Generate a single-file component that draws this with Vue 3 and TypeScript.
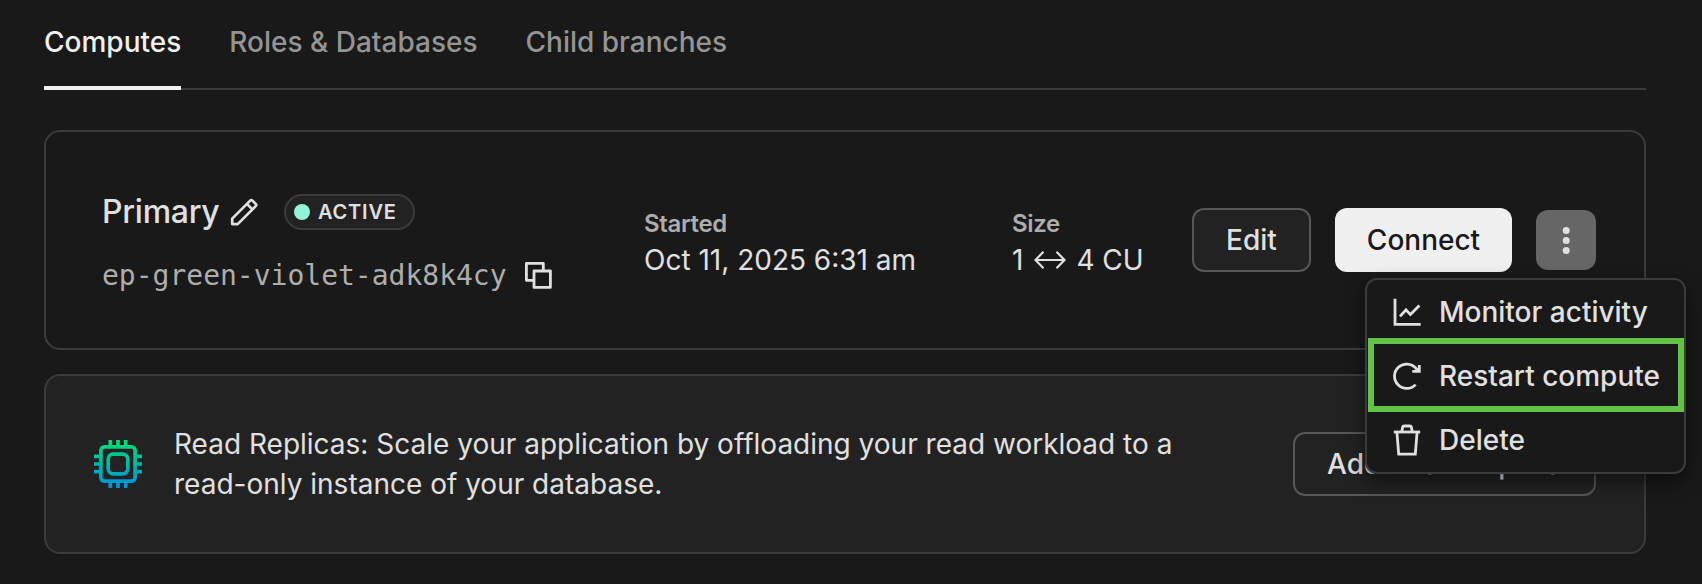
<script setup lang="ts">
import { ref } from 'vue'

type MenuIcon = 'chart' | 'restart' | 'trash'
interface MenuItem {
  label: string
  icon: MenuIcon
  highlighted?: boolean
}

const tabs: string[] = ['Computes', 'Roles & Databases', 'Child branches']
const activeTab = ref<string>('Computes')

const menuItems: MenuItem[] = [
  { label: 'Monitor activity', icon: 'chart' },
  { label: 'Restart compute', icon: 'restart', highlighted: true },
  { label: 'Delete', icon: 'trash' },
]
</script>

<template>
  <main class="page">
    <nav class="tabs">
      <button
        v-for="tab in tabs"
        :key="tab"
        class="tab"
        :class="{ active: tab === activeTab }"
        @click="activeTab = tab"
      >{{ tab }}</button>
    </nav>

    <section class="card compute">
      <div class="identity">
        <div class="title-row">
          <h2 class="name">Primary</h2>
          <svg class="pencil" width="28" height="28" viewBox="0 0 28 28" fill="none" stroke="currentColor" stroke-width="2.7" stroke-linejoin="round">
            <path d="M2.2 26.1V20.6L20.2 2.6Q21.3 1.5 22.4 2.6L25.7 5.9Q26.8 7 25.7 8.1L7.7 26.1Z" />
            <path d="M16.9 5.9L22.4 11.4" />
          </svg>
          <span class="badge"><i class="dot"></i>ACTIVE</span>
        </div>
        <div class="endpoint-row">
          <span class="endpoint">ep-green-violet-adk8k4cy</span>
          <svg class="copy" width="28" height="28" viewBox="0 0 28 28" fill="none" stroke="currentColor" stroke-width="2.8" stroke-linejoin="round">
            <path d="M9.2 19.3H2.4V2.4H19.3V9.2" />
            <rect x="10" y="10" width="16.4" height="16.4" />
          </svg>
        </div>
      </div>

      <dl class="fact started">
        <dt>Started</dt>
        <dd>Oct 11, 2025 6:31 am</dd>
      </dl>
      <dl class="fact size">
        <dt>Size</dt>
        <dd>
          <span>1</span>
          <svg class="range" width="32" height="20" viewBox="0 0 32 20" fill="none" stroke="currentColor" stroke-width="2.2">
            <path d="M1.5 10H30.5M9.5 1.7L1.5 10L9.5 18.3M22.5 1.7L30.5 10L22.5 18.3" />
          </svg>
          <span>4 CU</span>
        </dd>
      </dl>

      <div class="actions">
        <button class="btn outline edit">Edit</button>
        <button class="btn solid">Connect</button>
        <div class="more-wrap">
          <button class="more" aria-label="More">
            <svg width="8" height="28" viewBox="0 0 8 28" fill="currentColor">
              <circle cx="4.2" cy="4.6" r="3.5" />
              <circle cx="4.2" cy="14.6" r="3.5" />
              <circle cx="4.2" cy="24.5" r="3.5" />
            </svg>
          </button>
          <ul class="menu">
            <li v-for="item in menuItems" :key="item.label" class="menu-item" :class="{ highlighted: item.highlighted }">
              <svg v-if="item.icon === 'chart'" width="28" height="28" viewBox="0 0 28 28" fill="none" stroke="currentColor" stroke-width="2.8">
                <path d="M2 .7V26.4H27.7" />
                <path d="M7 18.4L13 11.8L17.4 16.6L26.4 7.6" />
              </svg>
              <svg v-else-if="item.icon === 'restart'" width="28" height="28" viewBox="0 0 28 28" fill="none" stroke="currentColor" stroke-width="2.8">
                <path d="M22.6 22.6A12.2 12.2 0 1 1 22.9 6.2L25.6 9" />
                <path d="M26.3 3V9.3H19.3" />
              </svg>
              <svg v-else width="28" height="32" viewBox="0 0 28 32" fill="none" stroke="currentColor" stroke-width="2.8">
                <path d="M.8 8H27.2" />
                <path d="M3.9 8L5.7 30.2H22.3L24.1 8" />
                <path d="M8.7 8L9.6 3.2Q9.9 2 11.1 2H16.9Q18.1 2 18.4 3.2L19.3 8" />
              </svg>
              <span>{{ item.label }}</span>
            </li>
          </ul>
        </div>
      </div>
    </section>

    <section class="card replicas">
      <svg class="chip" width="48" height="48" viewBox="0 0 48 48" fill="none" stroke="url(#chip-gradient)" stroke-width="3.7">
        <defs>
          <linearGradient id="chip-gradient" gradientUnits="userSpaceOnUse" x1="24" y1="0" x2="24" y2="48">
            <stop offset="0" stop-color="#00e070" />
            <stop offset=".5" stop-color="#00b8a5" />
            <stop offset="1" stop-color="#0090e0" />
          </linearGradient>
        </defs>
        <rect x="6.9" y="6.9" width="34.2" height="34.2" rx="3.5" />
        <rect x="14.2" y="14.2" width="19.6" height="19.6" rx="5" />
        <path d="M16.3 0V5M24 0V5M31.7 0V5M16.3 43V48M24 43V48M31.7 43V48M0 16.3H5M0 24H5M0 31.7H5M43 16.3H48M43 24H48M43 31.7H48" />
      </svg>
      <p class="description">Read Replicas: Scale your application by offloading your read workload to a read-only instance of your database.</p>
      <button class="btn outline add">Add Read Replica</button>
    </section>
  </main>
</template>

<style>
body {
  background: #191919;
}
</style>

<style scoped>
.page {
  box-sizing: border-box;
  width: 1702px;
  height: 584px;
  overflow: hidden;
  padding: 0 56px 0 44px;
  background: #191919;
  color: #e0e0e0;
  font-family: Inter, sans-serif;
  font-size: 28px;
}
button {
  font: inherit;
  color: inherit;
  border: 0;
  background: none;
  padding: 0;
  cursor: pointer;
}
.tabs {
  display: flex;
  gap: 48px;
  height: 88px;
  border-bottom: 2px solid #3b3b3b;
}
.tab {
  box-sizing: border-box;
  height: 90px;
  padding-bottom: 2px;
  border-bottom: 4px solid transparent;
  color: #949494;
  font-weight: 500;
  line-height: 84px;
  white-space: nowrap;
}
.tab.active {
  color: #f0f0f0;
  border-bottom-color: #f0f0f0;
}
.card {
  box-sizing: border-box;
  display: flex;
  align-items: center;
  border: 2px solid #3b3b3b;
  border-radius: 16px;
}
.compute {
  height: 220px;
  margin-top: 40px;
  padding: 0 48px 0 56px;
}
.identity {
  width: 542px;
  padding-top: 7px;
}
.title-row,
.endpoint-row {
  display: flex;
  align-items: center;
}
.title-row {
  height: 40px;
}
.name {
  width: 116px;
  margin: 0;
  font-size: 32px;
  font-weight: 500;
  line-height: 40px;
  letter-spacing: -0.25px;
}
.pencil {
  margin-left: 12px;
}
.badge {
  box-sizing: border-box;
  display: flex;
  align-items: center;
  width: 131px;
  height: 36px;
  margin-left: 26px;
  padding-left: 8px;
  border: 2px solid #3b3b3b;
  border-radius: 18px;
  background: #222;
  font-size: 20px;
  font-weight: 600;
  letter-spacing: 0.8px;
}
.dot {
  width: 16px;
  height: 16px;
  margin-right: 8px;
  border-radius: 50%;
  background: #93f3d7;
}
.endpoint-row {
  height: 40px;
  margin-top: 23px;
}
.endpoint {
  color: #adadad;
  font-family: "DejaVu Sans Mono", monospace;
}
.copy {
  margin-left: 17px;
}
.fact {
  margin: 0;
  padding-top: 8px;
  white-space: nowrap;
}
.fact dt {
  color: #adadad;
  font-size: 24px;
  font-weight: 600;
  line-height: 32px;
  letter-spacing: -0.35px;
}
.fact dd {
  display: flex;
  align-items: center;
  margin: 0;
  line-height: 40px;
}
.started {
  width: 368px;
}
.range {
  margin: 0 10px 0 11px;
}
.actions {
  display: flex;
  align-items: center;
  gap: 24px;
  margin-left: auto;
}
.btn {
  box-sizing: border-box;
  height: 64px;
  border-radius: 12px;
  font-weight: 500;
  white-space: nowrap;
}
.outline {
  border: 2px solid #575757;
  background: #222;
}
.edit {
  width: 119px;
}
.solid {
  width: 177px;
  background: #f0f0f0;
  color: #191919;
}
.more-wrap {
  position: relative;
}
.more {
  display: flex;
  align-items: center;
  justify-content: center;
  width: 60px;
  height: 60px;
  border-radius: 12px;
  background: #666;
}
.menu {
  position: absolute;
  z-index: 2;
  top: 68px;
  right: -90px;
  box-sizing: border-box;
  width: 321px;
  margin: 0;
  padding: 0;
  border: 2px solid #3b3b3b;
  border-radius: 12px;
  background: #191919;
  box-shadow: 0 8px 20px rgba(0, 0, 0, 0.5);
  list-style: none;
}
.menu-item {
  position: relative;
  display: flex;
  align-items: center;
  gap: 18px;
  height: 64px;
  padding-left: 26px;
  font-weight: 500;
  white-space: nowrap;
}
.menu-item.highlighted::after {
  content: "";
  position: absolute;
  inset: -6px 0 -4px 1px;
  border: 6px solid #62c446;
}
.replicas {
  height: 180px;
  margin-top: 24px;
  padding: 0 48px;
  background: #222;
}
.description {
  width: 1020px;
  margin: 0 0 0 32px;
  line-height: 40px;
}
.add {
  width: 303px;
  margin-left: auto;
}
</style>
